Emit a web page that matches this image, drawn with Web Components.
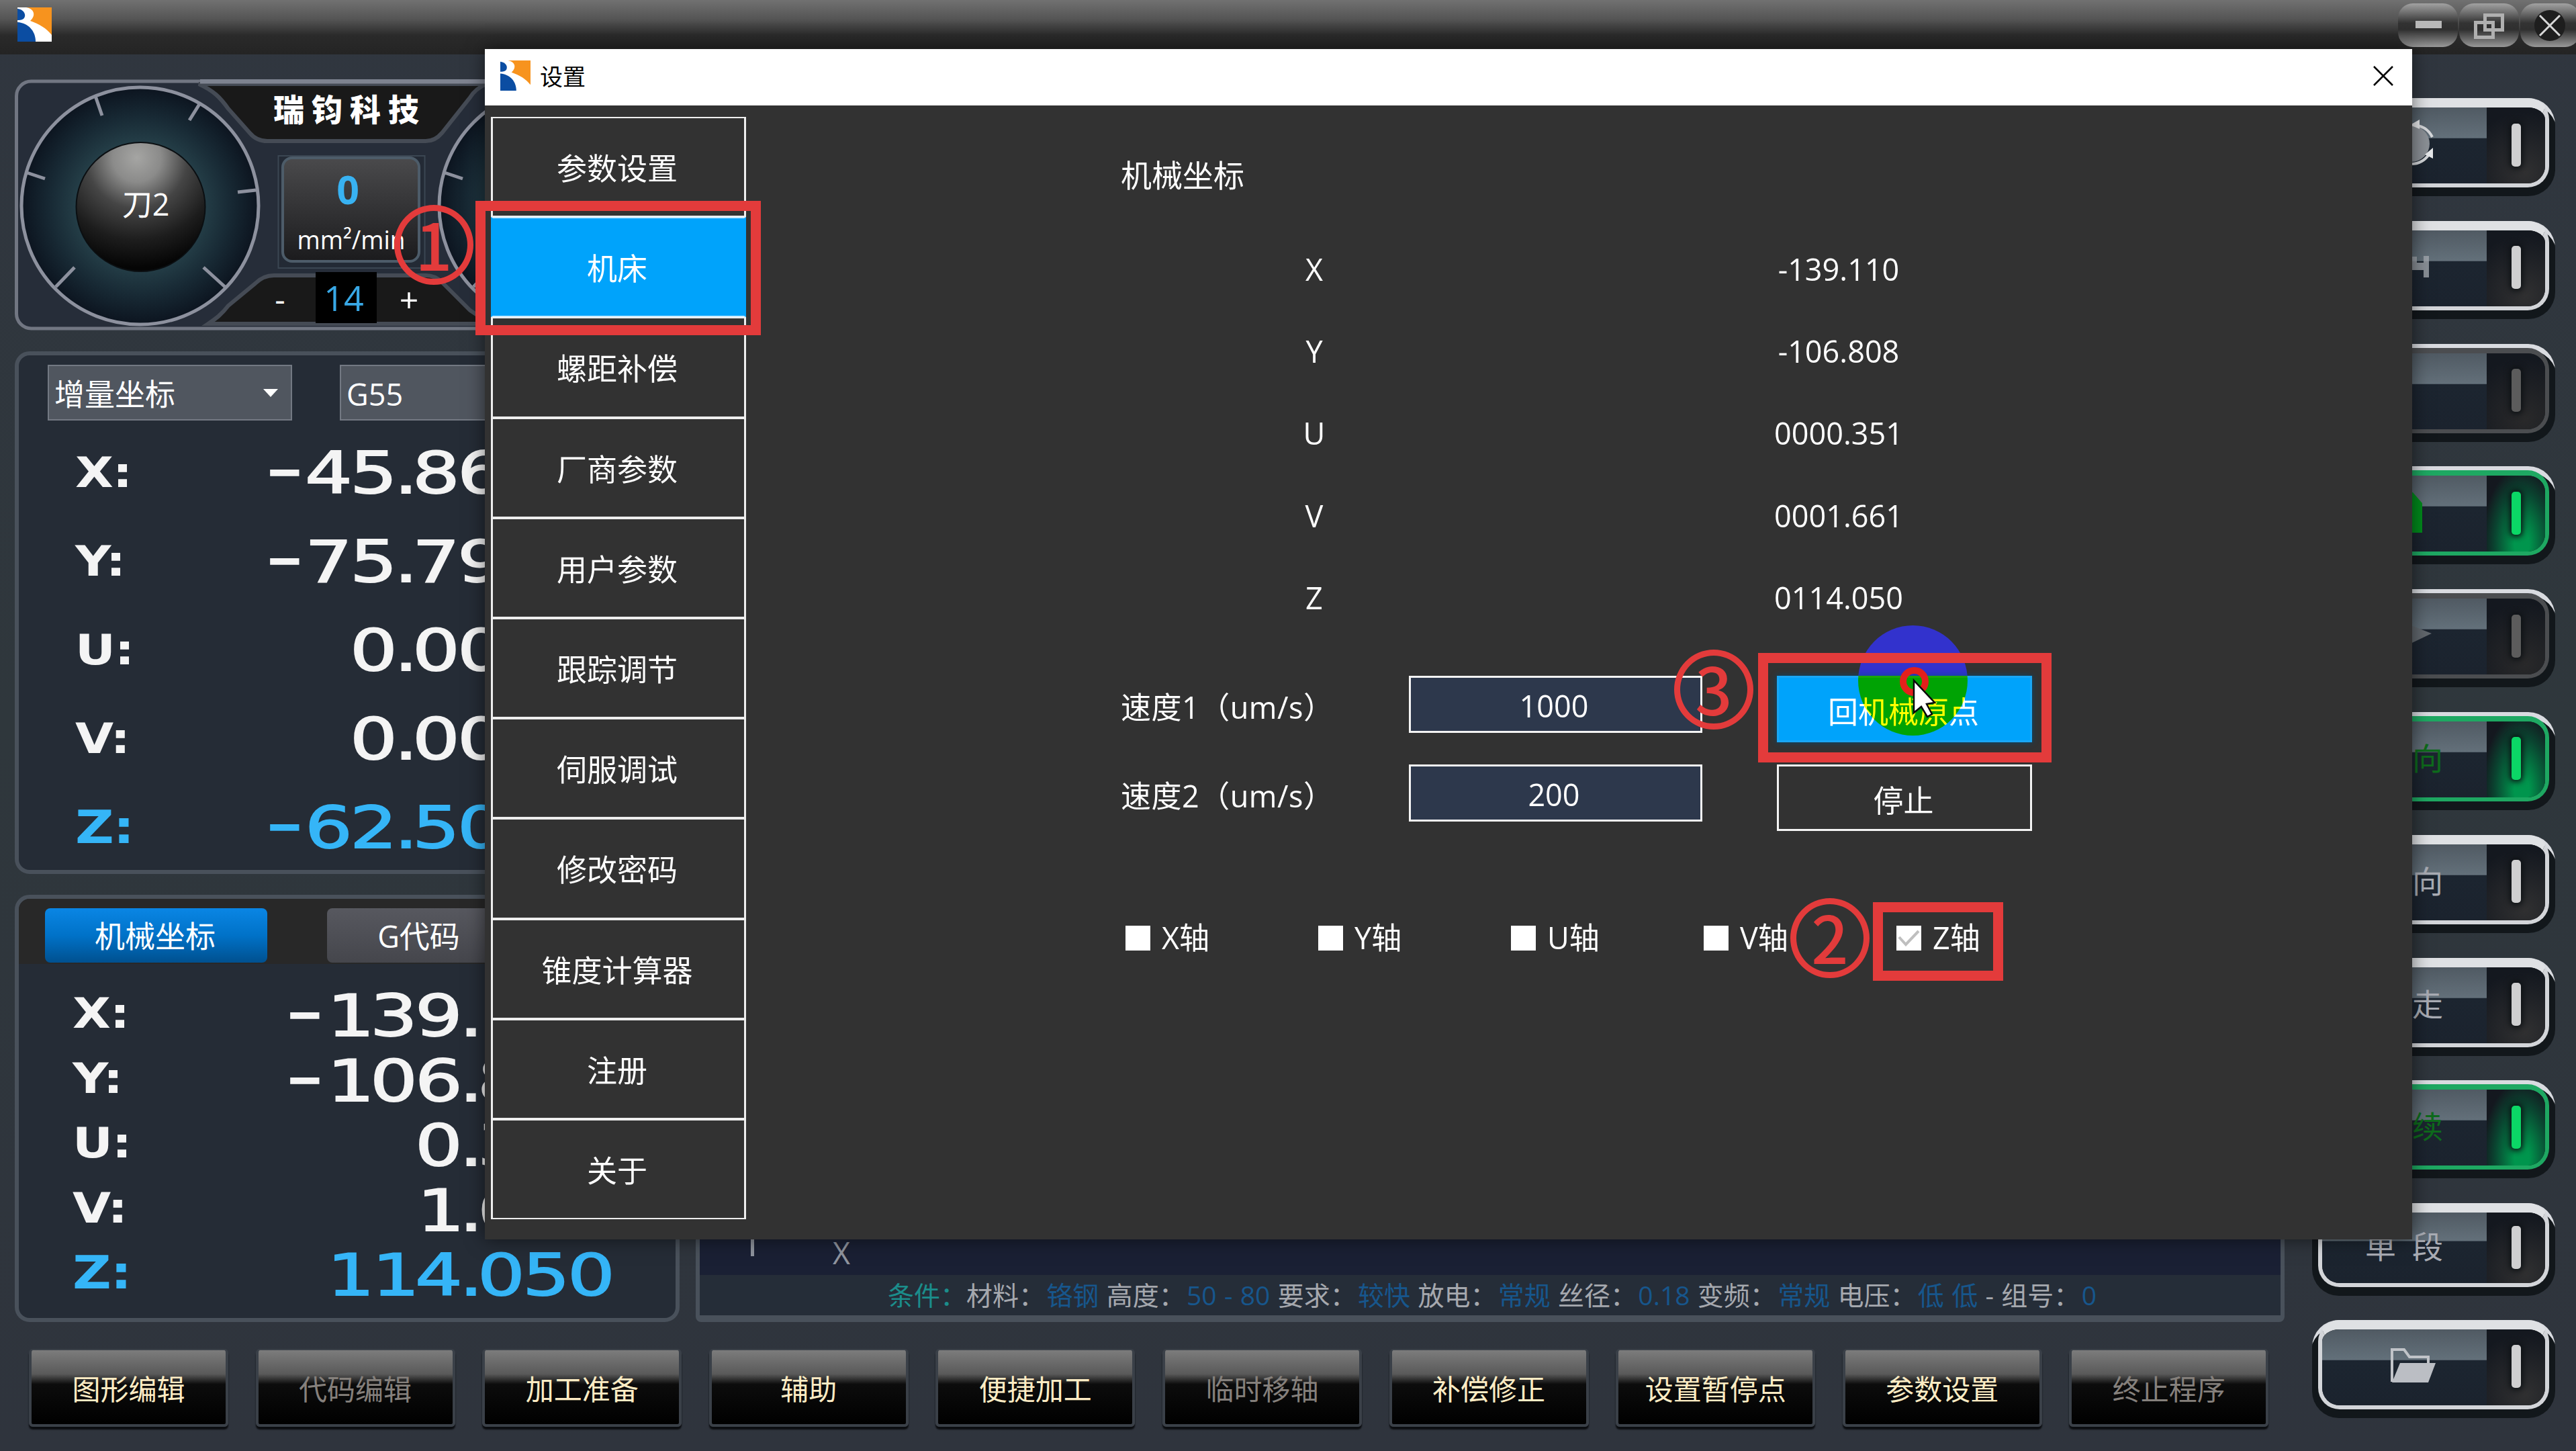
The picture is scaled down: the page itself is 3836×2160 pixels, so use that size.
<!DOCTYPE html>
<html lang="zh-CN">
<head>
<meta charset="utf-8">
<title>设置</title>
<style>
  html, body {
    margin: 0;
    width: 3836px;
    height: 2160px;
    overflow: hidden;
    background: #30363f;
    font-family: "Open Sans", "Noto Sans CJK SC", sans-serif;
    color: #fff;
  }
</style>
</head>
<body>
<cnc-app></cnc-app>

<script>
const define = (name, html, setup) => {
  customElements.define(name, class extends HTMLElement {
    constructor() {
      super();
      this.attachShadow({mode: 'open'});
    }

    connectedCallback() {
      this.shadowRoot.innerHTML = typeof html === 'function' ? html(this) : html;
      if(setup) {
        setup(this);
      }
    }
  });
};

define('app-logo', `
  <style>
    :host { display: block; width: 51px; height: 51px; }
    svg { display: block; width: 100%; height: 100%; }
  </style>
  <svg viewBox="0 0 51 51" preserveAspectRatio="none">
    <rect width="51" height="51" fill="#fff"/>
    <path d="M13 0H51V41C43 31 33 25 19 20C28 12 25 2 13 0Z" fill="#f7931e"/>
    <path d="M0 2C10 3 14 12 9 17C6 19 3 19 0 19Z" fill="#0b4da2"/>
    <path d="M0 22C16 23 27 35 27 51H0Z" fill="#0b4da2"/>
  </svg>
`);

define('title-bar', `
  <style>
    :host {
      display: flex;
      justify-content: space-between;
      height: 81px;
      background: linear-gradient(#717171, #555 35%, #2a2a2a 65%, #242424);
    }
    app-logo { margin: 11px 0 0 26px; }
    .buttons { display: flex; gap: 2px; padding-top: 5px; width: 265px; }
    .buttons svg {
      flex: none;
      width: 89px;
      height: 65px;
      border-radius: 22px;
      background: linear-gradient(#a2a2a2, #777 18%, #333 45%, #2f2f2f 60%, #707070 85%, #999);
    }
  </style>
  <app-logo></app-logo>
  <div class="buttons">
    <svg viewBox="0 0 89 65"><rect x="26" y="26" width="39" height="11" fill="#b8b8b8"/></svg>
    <svg viewBox="0 0 89 65" fill="none" stroke="#b0b0b0" stroke-width="5">
      <rect x="38.500" y="17.500" width="26" height="22"/>
      <rect x="24.500" y="28.500" width="26" height="22"/>
    </svg>
    <svg viewBox="0 0 89 65">
      <circle cx="44" cy="33" r="23" fill="#1e1e1e"/>
      <path d="M29 18L59 48M59 18L29 48" stroke="#d8d8d8" stroke-width="3"/>
    </svg>
  </div>
`);

define('gauge-panel', `
  <style>
    :host { display: block; height: 374px; }
    svg { display: block; }
    text { fill: #fff; text-anchor: middle; }
  </style>
  <svg width="990" height="374" viewBox="22 118 990 374">
    <defs>
      <radialGradient id="dial">
        <stop offset=".5" stop-color="#26414a"/>
        <stop offset=".75" stop-color="#182a35"/>
        <stop offset="1" stop-color="#0c141f"/>
      </radialGradient>
      <radialGradient id="knob" cx=".47" cy=".12" r=".85">
        <stop offset="0" stop-color="#a5a5a3"/>
        <stop offset=".22" stop-color="#8b8b8a"/>
        <stop offset=".46" stop-color="#454545"/>
        <stop offset=".75" stop-color="#1d1d1d"/>
        <stop offset="1" stop-color="#050505"/>
      </radialGradient>
      <linearGradient id="box" x2="0" y2="1">
        <stop offset="0" stop-color="#4a4a4c"/>
        <stop offset="1" stop-color="#1b1b1d"/>
      </linearGradient>
      <g id="gauge">
        <circle cx="208.500" cy="306.500" r="176.500" fill="url(#dial)" stroke="#8d919e" stroke-width="5"/>
        <path d="M142 143L152 172M297 155L282 179M40 257L67 266M354 286L381 283M111 398L83 427M303 398L335 427" stroke="#8d919e" stroke-width="5"/>
        <circle cx="209.500" cy="308" r="96" fill="url(#knob)" stroke="#0b0f12" stroke-width="2"/>
      </g>
    </defs>
    <rect x="24.500" y="121" width="985" height="368" rx="22" fill="#262d39" stroke="#717682" stroke-width="5"/>
    <path d="M296 125C318 135 328 145 340 162L372 198Q382 210 398 210H634Q648 210 658 198L700 145Q708 132 724 125Z" fill="#191919" stroke="#454b55" stroke-width="6"/>
    <path d="M310 482C322 474 330 468 340 455L380 422Q392 410 408 410H634Q648 410 658 420L700 462L730 482Z" fill="#191919" stroke="#454b55" stroke-width="6"/>
    <path d="M298 121H722" stroke="#7e8390" stroke-width="7"/>
    <use href="#gauge"/>
    <use href="#gauge" x="622"/>
    <rect x="414.500" y="232" width="218" height="167" fill="#232a35" stroke="#3b4652" stroke-width="2"/>
    <rect x="421" y="235" width="203" height="154" rx="14" fill="url(#box)" stroke="#4d5c69" stroke-width="4"/>
    <rect x="470" y="405" width="91" height="76" fill="#000"/>
    <text x="217" y="321" font-size="45">刀2</text>
    <text x="521" y="180" font-size="46" font-weight="900" letter-spacing="11">瑞钧科技</text>
    <text x="518" y="304" font-size="59" font-weight="700" style="fill:#38b2f2">0</text>
    <text x="523" y="371" font-size="39" textLength="161" lengthAdjust="spacingAndGlyphs">mm²/min</text>
    <text x="417" y="463" font-size="48">-</text>
    <text x="512" y="463" font-size="52" style="fill:#38a8e6">14</text>
    <text x="609" y="465" font-size="50">+</text>
  </svg>
`);

// digits sit in fixed cells, so every value is laid out from this table
const cell = 67;
const minusCell = 57;
const pointCell = 26;

define('axis-row', el => {
  const value = el.getAttribute('value');
  const pad = Number(el.getAttribute('pad') || 0);
  const stretch = 1.31;
  const digits = value.replace('-', '');
  const negative = value !== digits;
  let x = negative ? minusCell : 0;
  const cells = [...digits].map(ch => {
    const left = x - (ch === '.' ? 8 : ch === '1' ? 4 : 7);
    x += ch === '.' ? pointCell : cell;
    return (left / stretch).toFixed(1);
  });
  const minus = negative ? '<text class="minus" x="-3" y="53" transform="scale(1.8 1)">-</text>' : '';

  return `
    <style>
      :host {
        display: flex;
        justify-content: space-between;
        align-items: center;
        height: 64px;
        color: #f4f4f4;
      }
      :host([active]) { color: #35b5f7; }
      span {
        font: bold 62px/64px "DejaVu Sans", sans-serif;
        letter-spacing: -1px;
        transform: translateY(var(--label-shift, 0)) scaleX(1.19);
        transform-origin: left;
      }
      :host([active]) span { font-size: 67px; }
      svg { display: block; overflow: visible; }
      text { font-family: "DejaVu Sans", sans-serif; font-size: 85px; fill: currentColor; stroke: currentColor; stroke-width: 1.800px; }
      .minus { font-size: 78px; stroke-width: 3.500px; }
    </style>
    <span>${el.getAttribute('axis')}:</span>
    <svg width="${x + pad * cell - 10}" height="64">
      ${minus}
      <text x="${cells.join(' ')}" y="62" transform="scale(${stretch} 1)">${digits}</text>
    </svg>
  `;
});

define('combo-box', `
  <style>
    :host {
      display: flex;
      box-sizing: border-box;
      align-items: center;
      justify-content: space-between;
      width: 364px;
      height: 83px;
      padding: 4px 19px 0 8px;
      background: #50565f;
      border: 2px solid #737983;
      font-size: 45px;
      line-height: 1;
    }
    svg { margin-bottom: 3px; }
  </style>
  <slot></slot>
  <svg width="22" height="13"><path d="M0 0H22L11 12Z" fill="#fff"/></svg>
`);

define('work-panel', `
  <style>
    :host {
      display: flex;
      box-sizing: border-box;
      flex-direction: column;
      background: #252c36;
      border: 6px solid #49515b;
      border-radius: 22px;
      overflow: hidden;
    }
  </style>
  <slot></slot>
`);

define('tab-button', `
  <style>
    :host {
      display: flex;
      box-sizing: border-box;
      align-items: center;
      justify-content: center;
      width: 331px;
      height: 81px;
      padding: 2px 3px 0 0;
      border-radius: 8px;
      background: linear-gradient(#57585f, #45464c);
      font-size: 45px;
      line-height: 1;
    }
    :host([active]) { background: linear-gradient(#0a86e4, #0072c8 50%, #00508f); }
  </style>
  <slot></slot>
`);

define('menu-button', `
  <style>
    :host {
      display: flex;
      box-sizing: border-box;
      align-items: center;
      justify-content: center;
      width: 297px;
      height: 116px;
      padding-top: 6px;
      border-radius: 6px;
      border: solid #3a4048;
      border-width: 2px 4px 4px;
      background: linear-gradient(#7c7c7c, #5a5a5a 32%, #0c0c0c 46%, #000);
      box-shadow: 0 4px 2px #0b0d10;
      color: #fdecc4;
      font-size: 42px;
      line-height: 1;
    }
    :host([disabled]) { color: #85807c; }
  </style>
  <slot></slot>
`);

define('lamp-button', `
  <style>
    :host {
      --ring: #d3d5d9;
      --lamp: #cfcfd0;
      --glow: #303031;
      display: block;
      box-sizing: border-box;
      height: 146px;
      padding: 0 9px 13px;
      border-radius: 40px;
      background: #12171b;
      box-shadow: inset 0 12px 0 -3px #d9dbe0;
    }
    :host([off]) { --ring: #4b4d50; --lamp: #5c5c5c; --glow: #29292a; }
    :host([green]) { --ring: #1ea862; --lamp: #0bd766; --glow: #008f4a; }
    .ring {
      display: flex;
      box-sizing: border-box;
      height: 100%;
      border: 6px solid var(--ring);
      border-top-width: 14px;
      border-top-color: #dfe1e4;
      border-radius: 32px;
      overflow: hidden;
    }
    :host([green]) .ring, :host([off]) .ring { border-top-color: var(--ring); border-top-width: 8px; margin-top: 6px; height: calc(100% - 6px); }
    .glass {
      display: flex;
      box-sizing: border-box;
      align-items: center;
      justify-content: flex-end;
      width: 245px;
      padding: 0 65px 5px 0;
      background: linear-gradient(#505a63, #63707a 40%, #1c2530 41%, #1b232e);
      color: #a9acb4;
      font-size: 46px;
      line-height: 1;
      white-space: pre;
    }
    :host([green]) .glass { color: #0e6a1c; }
    .lamp {
      display: flex;
      align-items: center;
      justify-content: center;
      flex: 1;
      background: radial-gradient(circle at 65% 85%, var(--glow), #14181f 80%);
    }
    :host([green]) .lamp { background: radial-gradient(ellipse at 60% 90%, #00954d 15%, #0a4430 55%, #14181f 80%); }
    .lamp i {
      width: 14px;
      height: 64px;
      margin-bottom: 2px;
      border-radius: 5px;
      background: var(--lamp);
      box-shadow: 0 0 8px 3px #0d1114;
    }
  </style>
  <div class="ring">
    <div class="glass"><slot></slot></div>
    <div class="lamp"><i></i></div>
  </div>
`);

define('side-item', `
  <style>
    :host {
      display: flex;
      box-sizing: border-box;
      align-items: center;
      justify-content: center;
      flex: 1;
      padding: 4px 4px 0 0;
      border: 3px solid #eee;
      border-width: 2.500px 3px;
      font-size: 45px;
      line-height: 1;
    }
    :host([active]) { background: #00a3fb; border-color: #c9ebff; border-left-color: #00a3fb; border-right-color: #00a3fb; }
  </style>
  <slot></slot>
`);

define('axis-check', `
  <style>
    :host { display: flex; align-items: center; width: 287px; gap: 17px; font-size: 45px; line-height: 60px; }
    svg { width: 37px; height: 37px; background: #fff; }
    path { display: none; }
    :host([checked]) path { display: block; }
  </style>
  <svg viewBox="0 0 37 37"><path d="M4 17L14 28L33 8" fill="none" stroke="#bfbfbf" stroke-width="4"/></svg>
  <span><slot></slot></span>
`);

define('step-mark', el => {
  const [x, y] = el.getAttribute('at').split(' ');
  const [left, top, width, height] = el.getAttribute('frame').split(' ');
  return `
    <style>
      :host { color: #e33b3b; }
      b, i { position: absolute; box-sizing: border-box; }
      b {
        left: ${x}px;
        top: ${y}px;
        width: 118px;
        height: 119px;
        border: 9px solid;
        border-radius: 50%;
        font: 500 97px/93px "Noto Sans CJK SC", sans-serif;
        text-align: center;
      }
      i { left: ${left}px; top: ${top}px; width: ${width}px; height: ${height}px; border: 15px solid; }
    </style>
    <b>${el.getAttribute('step')}</b><i></i>
  `;
});

define('settings-dialog', `
  <style>
    :host {
      position: absolute;
      left: 722px;
      top: 73px;
      display: flex;
      flex-direction: column;
      width: 2870px;
      height: 1772px;
      background: #323232;
      box-shadow: 0 0 26px rgba(0, 0, 0, .55);
      isolation: isolate;
    }
    header {
      display: flex;
      box-sizing: border-box;
      align-items: center;
      height: 84px;
      padding: 0 28px 5px 23px;
      background: #fff;
      color: #000;
      font-size: 34px;
    }
    header app-logo { width: 45px; height: 45px; margin-right: 14px; }
    header svg { margin-left: auto; }
    .body { display: flex; flex: 1; }
    nav { display: flex; flex-direction: column; width: 380px; height: 1641px; margin: 17px 0 0 9px; }
    main { margin-left: 558px; padding-top: 73px; font-size: 46px; }
    h2 { margin: 0 0 49px; font: inherit; line-height: 60px; }
    .axes { display: grid; grid-template-columns: 576px 984px; grid-auto-rows: 122.300px; align-items: center; justify-items: center; font-size: 45px; }
    .axes span:nth-child(even) { padding-left: 2px; }
    .speed { display: grid; grid-template-columns: 429px 437px 380px; grid-template-rows: 132px 98px; margin-top: 56px; font-size: 45px; }
    .speed > * { display: flex; box-sizing: border-box; align-items: center; }
    .speed label { height: 88px; white-space: nowrap; letter-spacing: .5px; }
    .field { justify-content: center; height: 85px; padding: 3px 5px 0 0; border: 3px solid #f4f4f4; background: #2d384c; }
    .button { justify-content: center; height: 99px; margin-left: 111px; width: 380px; padding: 3px 3px 0 0; border: 3px solid #f4f4f4; }
    .primary { background: #00a3fb; border-color: #1aa6f4; box-shadow: 0 0 8px #064a70; }
    .checks { display: flex; margin: 130px 0 0 7px; }
    .spot {
      position: absolute;
      left: 2045px;
      top: 858px;
      width: 163px;
      height: 164px;
      border-radius: 50%;
      background: #00f;
      mix-blend-mode: difference;
    }
  </style>
  <header>
    <app-logo></app-logo>设置
    <svg width="30" height="30"><path d="M1 1L29 29M29 1L1 29" stroke="#000" stroke-width="2.500"/></svg>
  </header>
  <div class="body">
    <nav>
      <side-item>参数设置</side-item>
      <side-item active>机床</side-item>
      <side-item>螺距补偿</side-item>
      <side-item>厂商参数</side-item>
      <side-item>用户参数</side-item>
      <side-item>跟踪调节</side-item>
      <side-item>伺服调试</side-item>
      <side-item>修改密码</side-item>
      <side-item>锥度计算器</side-item>
      <side-item>注册</side-item>
      <side-item>关于</side-item>
    </nav>
    <main>
      <h2>机械坐标</h2>
      <div class="axes">
        <span>X</span><span>-139.110</span>
        <span>Y</span><span>-106.808</span>
        <span>U</span><span>0000.351</span>
        <span>V</span><span>0001.661</span>
        <span>Z</span><span>0114.050</span>
      </div>
      <div class="speed">
        <label>速度1（um/s）</label><div class="field">1000</div><div class="button primary">回机械原点</div>
        <label>速度2（um/s）</label><div class="field">200</div><div class="button">停止</div>
      </div>
      <div class="checks">
        <axis-check>X轴</axis-check>
        <axis-check>Y轴</axis-check>
        <axis-check>U轴</axis-check>
        <axis-check>V轴</axis-check>
        <axis-check checked>Z轴</axis-check>
      </div>
    </main>
  </div>
  <div class="spot"></div>
`);

define('mouse-pointer', `
  <style>
    :host { position: absolute; left: 2826px; top: 990px; }
    svg { display: block; }
  </style>
  <svg width="60" height="80">
    <circle cx="24.500" cy="24.500" r="16.500" fill="none" stroke="#e3201c" stroke-width="10"/>
    <path d="M24 23V71L35 62L44 77L51 73L43 58L55 56Z" fill="#fff" stroke="#0a0a0a" stroke-width="2.500"/>
  </svg>
`);

define('cnc-app', `
  <style>
    :host {
      display: block;
      position: relative;
      width: 3836px;
      height: 2160px;
      overflow: hidden;
      background: linear-gradient(#30363f, #2f373c 50%, #2f343d);
    }
    .work {
      display: grid;
      grid-template-columns: 990px 2366px 362px;
      grid-template-rows: 1850px 116px;
      column-gap: 24px;
      row-gap: 40px;
      padding: 37px 0 0 22px;
    }
    .left { display: flex; flex-direction: column; gap: 31px; }
    .relative { height: 778px; }
    .combos { display: flex; flex: none; gap: 71px; padding: 14px 0 0 43px; }
    .rows { display: flex; flex-direction: column; }
    .relative .rows { gap: 68px; padding: 46px 261px 0 84px; }
    .machine { height: 636px; }
    .machine axis-row { --label-shift: -3px; }
    .tabs { display: flex; gap: 89px; padding: 14px 0 2px 39px; background: #282828; }
    .tabs tab-button:last-child { width: 276px; }
    .machine .rows { gap: 32.500px; padding: 45px 97px 0 80px; }
    .status { justify-content: flex-end; border-bottom-width: 10px; border-radius: 8px; background: #1a2034; }
    .plot { padding: 0 0 2px 76px; display: flex; gap: 117px; align-items: flex-start; color: #8f949e; font-size: 45px; line-height: 62px; }
    .plot i { width: 5px; height: 36px; background: #8f949e; }
    .cond {
      height: 60px;
      padding-left: 280px;
      background: #252d38;
      color: #a5a8ae;
      font-size: 39px;
      line-height: 60px;
      word-spacing: 1.200px;
      white-space: pre;
    }
    .cond b { margin-left: 2.300px; font-weight: 400; color: #17568c; }
    .cond u { text-decoration: none; color: #1b8d8b; }
    .side { display: flex; flex-direction: column; grid-row: 1 / 3; grid-column: 3; margin: 28px -17px 0 17px; gap: 36.800px; }
    .side .short { height: 138px; margin-bottom: -1px; }
    .bar { display: flex; grid-column: 1 / 3; gap: 40.600px; margin-left: 21px; }
  </style>
  <title-bar></title-bar>
  <div class="work">
    <div class="left">
      <gauge-panel></gauge-panel>
      <work-panel class="relative">
        <div class="combos"><combo-box>增量坐标</combo-box><combo-box>G55</combo-box></div>
        <div class="rows">
          <axis-row axis="X" value="-45.86"></axis-row>
          <axis-row axis="Y" value="-75.79"></axis-row>
          <axis-row axis="U" value="0.00"></axis-row>
          <axis-row axis="V" value="0.00"></axis-row>
          <axis-row axis="Z" value="-62.50" active></axis-row>
        </div>
      </work-panel>
      <work-panel class="machine">
        <div class="tabs"><tab-button active>机械坐标</tab-button><tab-button>G代码</tab-button></div>
        <div class="rows">
          <axis-row axis="X" value="-139." pad="3"></axis-row>
          <axis-row axis="Y" value="-106.8" pad="2"></axis-row>
          <axis-row axis="U" value="0.3" pad="2"></axis-row>
          <axis-row axis="V" value="1.6" pad="2"></axis-row>
          <axis-row axis="Z" value="114.050" active></axis-row>
        </div>
      </work-panel>
    </div>
    <work-panel class="status">
      <div class="plot"><i></i>X</div>
      <div class="cond"><u>条件：</u>材料：<b>铬钢</b> 高度：<b>50 - 80</b> 要求：<b>较快</b> 放电：<b>常规</b> 丝径：<b>0.18</b> 变频：<b>常规</b> 电压：<b>低 低</b> - 组号：<b>0</b></div>
    </work-panel>
    <div class="side">
      <lamp-button>
        <svg width="68" height="72" style="margin-right:13px">
          <circle cx="34" cy="36" r="27" fill="#8b9096"/>
          <path d="M34 8Q56 8 65 26M34 66Q50 66 60 52" fill="none" stroke="#d5d7da" stroke-width="4"/>
          <path d="M32 8L46 0V14ZM54 52L66 42V58Z" fill="#e6e7e9"/>
        </svg>
      </lamp-button>
      <lamp-button>
        <svg width="46" height="46" style="margin-right:17px"><path d="M0 8H24V17H34V7H42V39H34V28H0Z" fill="#a4a9af" opacity=".8"/></svg>
      </lamp-button>
      <lamp-button off></lamp-button>
      <lamp-button green>
        <svg width="46" height="74" style="margin-right:31px"><path d="M0 0L32 8L46 24V68H0Z" fill="#008a1c"/></svg>
      </lamp-button>
      <lamp-button off>
        <svg width="46" height="40" style="margin-right:17px"><path d="M0 0L46 18L0 40Z" fill="#62686e"/></svg>
      </lamp-button>
      <lamp-button green>向</lamp-button>
      <lamp-button>向</lamp-button>
      <lamp-button>走</lamp-button>
      <lamp-button green>续</lamp-button>
      <lamp-button class="short">单  段</lamp-button>
      <lamp-button>
        <svg width="68" height="52" style="margin:0 10px 0 0">
          <path d="M2 50V2H20L28 13H56V22" fill="none" stroke="#c0c3c8" stroke-width="4"/>
          <path d="M14 22H67L56 51H2Z" fill="#bbbec4"/>
        </svg>
      </lamp-button>
    </div>
    <div class="bar">
      <menu-button>图形编辑</menu-button>
      <menu-button disabled>代码编辑</menu-button>
      <menu-button>加工准备</menu-button>
      <menu-button>辅助</menu-button>
      <menu-button>便捷加工</menu-button>
      <menu-button disabled>临时移轴</menu-button>
      <menu-button>补偿修正</menu-button>
      <menu-button>设置暂停点</menu-button>
      <menu-button>参数设置</menu-button>
      <menu-button disabled>终止程序</menu-button>
    </div>
  </div>
  <settings-dialog></settings-dialog>
  <step-mark step="1" at="587 305" frame="708 299 425 200"></step-mark>
  <step-mark step="2" at="2666 1337" frame="2789 1343 194 117"></step-mark>
  <step-mark step="3" at="2493 967" frame="2618 972 437 163"></step-mark>
  <mouse-pointer></mouse-pointer>
`);
</script>
</body>
</html>
